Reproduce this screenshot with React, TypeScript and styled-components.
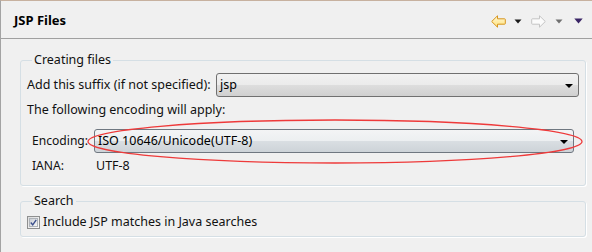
import React from "react";
import styled, { createGlobalStyle } from "styled-components";

const Global = createGlobalStyle`
  html, body { margin: 0; padding: 0; background: #f0f0f0; }
  * { box-sizing: border-box; }
`;

const Page = styled.div`
  position: relative;
  width: 592px;
  height: 252px;
  background: #f0f0f0;
  border-top: 1px solid #c7b19f;
  border-left: 1px solid #a3a3a3;
  font-family: "Noto Sans", "Liberation Sans", sans-serif;
  font-size: 12.5px;
  color: #111;
  overflow: hidden;
`;

const Header = styled.div`
  height: 38px;
  display: flex;
  align-items: center;
  padding: 0 9px 0 13px;
  border-bottom: 1px solid #a0a0a0;
`;

const Title = styled.div`
  flex: 1;
  font-weight: bold;
  font-size: 13px;
  color: #000;
  padding-top: 1px;
`;

const Toolbar = styled.div`
  display: flex;
  align-items: center;
  padding-top: 3px;
`;

const ToolIcon = styled.svg<{ $ml: number }>`
  display: block;
  margin-left: ${(p) => p.$ml}px;
`;

const Body = styled.div`
  padding: 13px 6px 0 19px;
  display: flex;
  flex-direction: column;
  gap: 7px;
`;

const Group = styled.fieldset<{ $pb: number }>`
  margin: 0;
  padding: 0 6px ${(p) => p.$pb}px 6px;
  border: 1px solid #d5dfe5;
  border-radius: 3px;
  box-shadow: 1px 1px 0 #ffffff;
  min-width: 0;
`;

const Legend = styled.legend`
  margin-left: 5px;
  padding: 0 2px;
  line-height: 16px;
  color: #111;
`;

const SuffixRow = styled.div`
  display: grid;
  grid-template-columns: 183px 1fr;
  column-gap: 6px;
  align-items: center;
  margin-top: 5px;
`;

const Label = styled.span`
  line-height: 16px;
  white-space: nowrap;
`;

const Note = styled.div`
  line-height: 16px;
  margin-top: 5px;
`;

const EncodingGrid = styled.div`
  display: grid;
  grid-template-columns: 56px 1fr;
  column-gap: 6px;
  row-gap: 5px;
  align-items: center;
  margin: 11px 5px 0 5px;
  font-size: 12.1px;
`;

const Value = styled.span`
  line-height: 16px;
  padding-left: 2px;
  font-size: 12.5px;
`;

const Combo = styled.div<{ $active?: boolean }>`
  height: 24px;
  display: flex;
  align-items: center;
  padding: 0 5px 0 3px;
  border: 1px solid ${(p) => (p.$active ? "#6f7780" : "#707070")};
  border-radius: 3px;
  background: ${(p) =>
    p.$active
      ? "linear-gradient(#f3f4f5 0%, #eceff1 48%, #d9dee2 52%, #cdd3d8 100%)"
      : "linear-gradient(#f2f2f2 0%, #ebebeb 48%, #dddddd 52%, #d0d0d0 100%)"};
  color: #000;
  font-size: 12.5px;
`;

const ComboText = styled.span`
  flex: 1;
  line-height: 16px;
`;

const Arrow = styled.span`
  width: 0;
  height: 0;
  border-left: 4px solid transparent;
  border-right: 4px solid transparent;
  border-top: 4px solid #000;
  margin-top: 1px;
`;

const CheckRow = styled.label`
  display: flex;
  align-items: center;
  gap: 3px;
  margin-top: 5px;
  line-height: 16px;
`;

const CheckBox = styled.span`
  width: 13px;
  height: 13px;
  border: 1px solid #8e8f8f;
  background: linear-gradient(135deg, #dcdcdc, #fbfbfb);
  display: flex;
  align-items: center;
  justify-content: center;
  padding: 1px;
`;

const CheckInner = styled.span`
  width: 100%;
  height: 100%;
  border: 1px solid #aeb3b9;
  background: linear-gradient(135deg, #cbcfd5, #f6f6f6);
  display: flex;
  align-items: center;
  justify-content: center;
`;

const Highlight = styled.svg`
  position: absolute;
  left: -1px;
  top: -1px;
  pointer-events: none;
`;

export default function App() {
  return (
    <>
      <Global />
      <Page>
        <Header>
          <Title>JSP Files</Title>
          <Toolbar>
            <ToolIcon $ml={0} width="15" height="13" viewBox="0 0 15 13">
              <defs>
                <linearGradient id="bk" x1="0" y1="0" x2="0" y2="1">
                  <stop offset="0" stopColor="#fff8d8" />
                  <stop offset="1" stopColor="#ffe27a" />
                </linearGradient>
              </defs>
              <path
                d="M0.7 6.5 L6.5 0.8 L6.5 3.8 L13.6 3.8 Q14.3 3.8 14.3 4.5 L14.3 8.5 Q14.3 9.2 13.6 9.2 L6.5 9.2 L6.5 12.2 Z"
                fill="url(#bk)"
                stroke="#d6951e"
                strokeWidth="1"
                strokeLinejoin="round"
              />
            </ToolIcon>
            <ToolIcon $ml={8} width="8" height="5" viewBox="0 0 8 5">
              <path d="M0.5 0.5 L7.5 0.5 L4 4.5 Z" fill="#1a1a1a" />
            </ToolIcon>
            <ToolIcon $ml={9} width="15" height="13" viewBox="0 0 15 13">
              <path
                d="M14.3 6.5 L8.5 0.8 L8.5 3.8 L1.4 3.8 Q0.7 3.8 0.7 4.5 L0.7 8.5 Q0.7 9.2 1.4 9.2 L8.5 9.2 L8.5 12.2 Z"
                fill="#fbfbfb"
                stroke="#c4c4c4"
                strokeWidth="1"
                strokeLinejoin="round"
              />
            </ToolIcon>
            <ToolIcon $ml={9} width="8" height="5" viewBox="0 0 8 5">
              <path d="M0.5 0.5 L7.5 0.5 L4 4.5 Z" fill="#707070" />
            </ToolIcon>
            <ToolIcon $ml={11} width="9" height="6" viewBox="0 0 9 6">
              <path d="M0.3 0.5 L8.7 0.5 L4.5 5.5 Z" fill="#3a2566" />
            </ToolIcon>
          </Toolbar>
        </Header>
        <Body>
          <Group $pb={11}>
            <Legend>Creating files</Legend>
            <SuffixRow>
              <Label>Add this suffix (if not specified):</Label>
              <Combo>
                <ComboText>jsp</ComboText>
                <Arrow />
              </Combo>
            </SuffixRow>
            <Note>The following encoding will apply:</Note>
            <EncodingGrid>
              <Label>Encoding:</Label>
              <Combo $active>
                <ComboText>ISO 10646/Unicode(UTF-8)</ComboText>
                <Arrow />
              </Combo>
              <Label>IANA:</Label>
              <Value>UTF-8</Value>
            </EncodingGrid>
          </Group>
          <Group $pb={6}>
            <Legend>Search</Legend>
            <CheckRow>
              <CheckBox>
                <CheckInner>
                  <svg width="9" height="9" viewBox="0 0 9 9">
                    <path
                      d="M1 4.5 L3.5 7.5 L8 1"
                      fill="none"
                      stroke="#3b4f8c"
                      strokeWidth="1.8"
                    />
                  </svg>
                </CheckInner>
              </CheckBox>
              <span>Include JSP matches in Java searches</span>
            </CheckRow>
          </Group>
        </Body>
        <Highlight width="592" height="252" viewBox="0 0 592 252">
          <ellipse
            cx="335"
            cy="141.5"
            rx="247"
            ry="21.5"
            fill="none"
            stroke="#ee3a3a"
            strokeWidth="1.3"
          />
        </Highlight>
      </Page>
    </>
  );
}
